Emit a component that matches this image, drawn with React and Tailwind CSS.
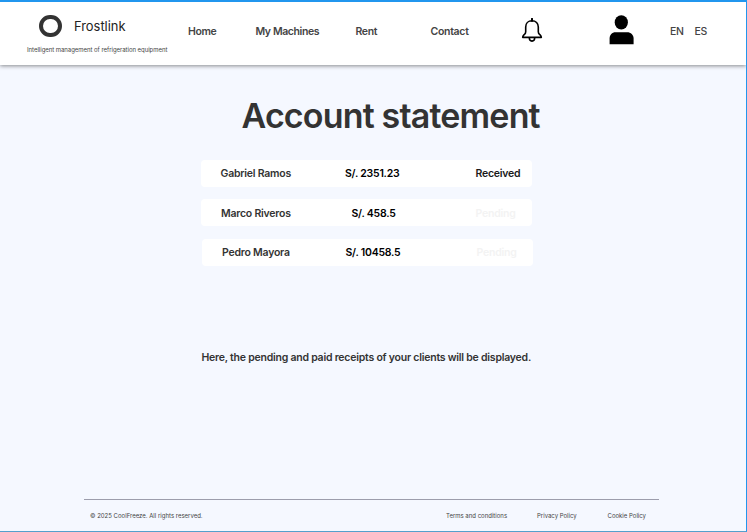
import React from "react";

const rows = [
  { name: "Gabriel Ramos", amount: "S/. 2351.23", status: "Received", box: "ml-[201px]", nameX: "w-[125px] pl-[19.5px]", amountX: "pl-[19px]", tone: "text-[#1a1a1a]" },
  { name: "Marco Riveros", amount: "S/. 458.5", status: "Pending", box: "ml-[201px]", nameX: "w-[125px] pl-5", amountX: "pl-[25.5px]", tone: "text-[#f3f3f3]" },
  { name: "Pedro Mayora", amount: "S/. 10458.5", status: "Pending", box: "ml-[202px]", nameX: "w-[125px] pl-5", amountX: "pl-[18.5px]", tone: "text-[#f3f3f3]" },
];

function BellIcon() {
  return (
    <svg className="h-[25px] w-[22px] shrink-0" viewBox="0 0 22 25" fill="none" stroke="#000" strokeWidth="1.6">
      <path d="M11 0.8V2.8" strokeLinecap="round" strokeWidth="2" />
      <path d="M11 2.8C7.2 2.8 4.7 5.3 4.7 9V13.8C4.7 16 3.6 16.3 2.6 17.3C2 17.9 1.8 18.5 1.7 19.4H20.3C20.2 18.5 20 17.9 19.4 17.3C18.4 16.3 17.3 16 17.3 13.8V9C17.3 5.3 14.8 2.8 11 2.8Z" strokeLinejoin="round" />
      <path d="M8.3 19.8C8.3 24.2 13.7 24.2 13.7 19.8" />
    </svg>
  );
}

function UserIcon() {
  return (
    <svg className="-mt-px h-[30px] w-[25px] shrink-0" viewBox="0 0 25 30">
      <ellipse cx="12.3" cy="7.4" rx="6.6" ry="7.2" />
      <path d="M0.6 29.2V23.5C0.6 19.8 3 17.2 6.5 17.2H18.2C21.8 17.2 24.6 19.8 24.6 23.5V29.2Z" />
    </svg>
  );
}

function Header() {
  return (
    <header className="h-[63px] bg-white shadow-[0_1px_4px_rgba(0,0,0,0.45)]">
      <div className="flex">
        <div className="w-[188px] shrink-0">
          <div className="ml-[39px] mt-[12px] flex h-[24px] items-center">
            <div className="size-[22.5px] rounded-full border-[4px] border-[#333]" />
            <span className="ml-[12.5px] mt-[2px] text-[12.9px] leading-6 text-[#222]">Frostlink</span>
          </div>
          <div className="ml-[27px] mt-[6px] whitespace-nowrap text-[6px] leading-3 tracking-[-0.04px] text-[#444]">
            Intelligent management of refrigeration equipment
          </div>
        </div>
        <nav className="flex h-[57px] items-center text-[10.5px] font-semibold text-[#444]">
          <span className="w-[67.5px] pt-[3px] tracking-[-0.38px]">Home</span>
          <span className="w-[100px] pt-[3px] tracking-[-0.4px]">My Machines</span>
          <span className="w-[75px] pt-[3px] tracking-[-0.35px]">Rent</span>
          <span className="w-[90px] pt-[3px] tracking-[-0.3px]">Contact</span>
          <BellIcon />
          <span className="w-[66px]" />
          <UserIcon />
          <span className="ml-[36.5px] w-[24.5px] pt-[3px] font-medium tracking-[-0.3px]">EN</span>
          <span className="pt-[3px] font-medium tracking-[-0.3px]">ES</span>
        </nav>
      </div>
    </header>
  );
}

export default function App() {
  return (
    <div className="flex h-[532px] w-[747px] flex-col overflow-hidden border-b border-r border-t-2 border-[#2196ee] border-b-[#55a0cc] bg-[#f5f8ff] font-['Inter',sans-serif] text-[#333]">
      <Header />
      <main className="flex-1">
        <h1 className="ml-[241.5px] mt-[31px] whitespace-nowrap text-[34px] font-semibold leading-[40px] tracking-[-0.83px]">Account statement</h1>
        <div className="mt-[24px] flex flex-col gap-[12.3px]">
          {rows.map((r) => (
            <div key={r.name} className={`flex h-[27px] w-[331px] items-center rounded-[4px] bg-white pt-[1.5px] text-[10.5px] font-semibold tracking-[-0.23px] ${r.box}`}>
              <span className={r.nameX}>{r.name}</span>
              <span className={`w-[149.5px] text-black ${r.amountX}`}>{r.amount}</span>
              <span className={r.tone}>{r.status}</span>
            </div>
          ))}
        </div>
        <p className="ml-[201.5px] mt-[84px] whitespace-nowrap text-[10.5px] font-semibold leading-4 tracking-[-0.23px]">
          Here, the pending and paid receipts of your clients will be displayed.
        </p>
      </main>
      <footer className="ml-[84px] h-[32px] w-[575px] border-t border-[#9c9dac]">
        <div className="flex whitespace-nowrap pl-[6px] pt-[10px] text-[6px] leading-3 text-[#444]">
          <span className="w-[356px]">© 2025 CoolFreeze. All rights reserved.</span>
          <span className="w-[91px]">Terms and conditions</span>
          <span className="w-[70.5px]">Privacy Policy</span>
          <span>Cookie Policy</span>
        </div>
      </footer>
    </div>
  );
}
